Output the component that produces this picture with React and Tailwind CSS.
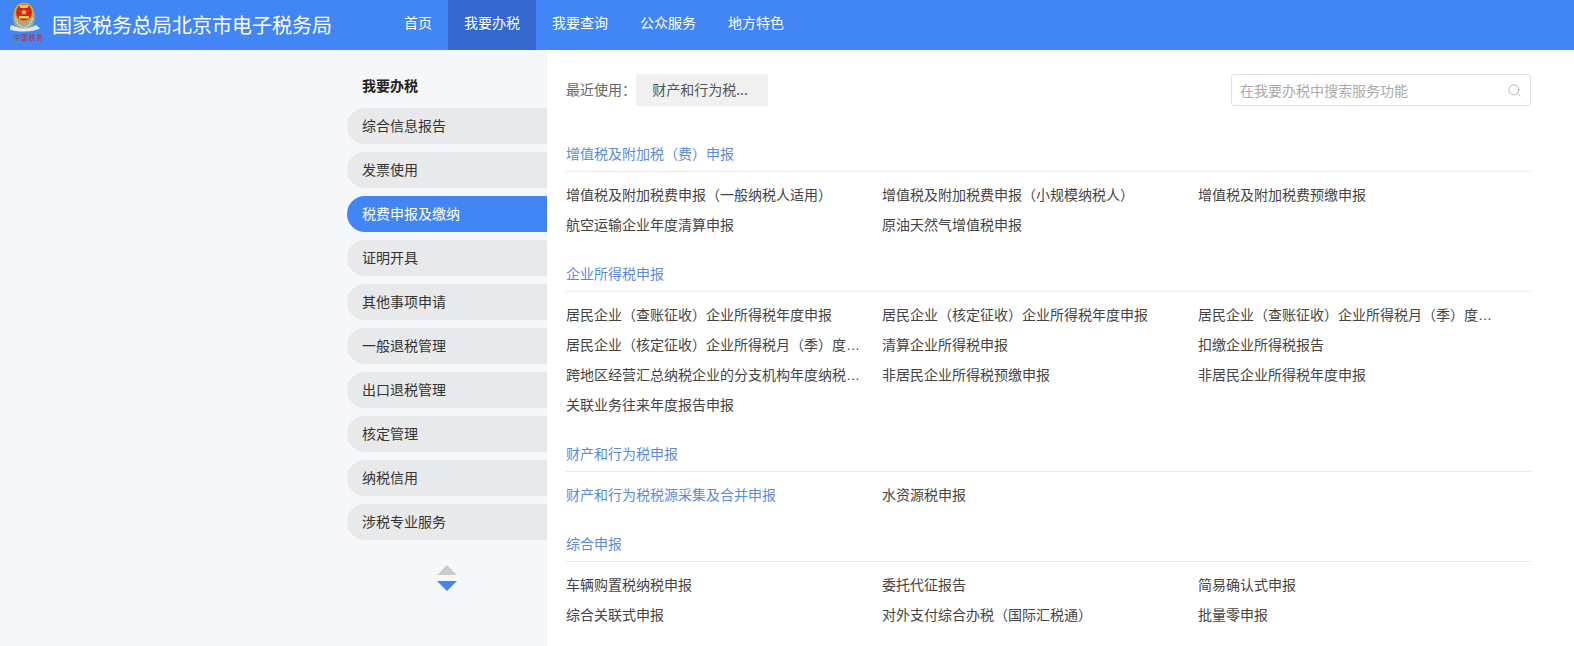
import { Search } from 'lucide-react';

const navItems = ['首页', '我要办税', '我要查询', '公众服务', '地方特色'];

const menuItems = [
  '综合信息报告',
  '发票使用',
  '税费申报及缴纳',
  '证明开具',
  '其他事项申请',
  '一般退税管理',
  '出口退税管理',
  '核定管理',
  '纳税信用',
  '涉税专业服务',
];

const sections = [
  {
    title: '增值税及附加税（费）申报',
    links: [
      '增值税及附加税费申报（一般纳税人适用）',
      '增值税及附加税费申报（小规模纳税人）',
      '增值税及附加税费预缴申报',
      '航空运输企业年度清算申报',
      '原油天然气增值税申报',
    ],
  },
  {
    title: '企业所得税申报',
    links: [
      '居民企业（查账征收）企业所得税年度申报',
      '居民企业（核定征收）企业所得税年度申报',
      '居民企业（查账征收）企业所得税月（季）度申报',
      '居民企业（核定征收）企业所得税月（季）度申报',
      '清算企业所得税申报',
      '扣缴企业所得税报告',
      '跨地区经营汇总纳税企业的分支机构年度纳税申报',
      '非居民企业所得税预缴申报',
      '非居民企业所得税年度申报',
      '关联业务往来年度报告申报',
    ],
  },
  {
    title: '财产和行为税申报',
    links: ['财产和行为税税源采集及合并申报', '水资源税申报'],
    active: 0,
  },
  {
    title: '综合申报',
    links: [
      '车辆购置税纳税申报',
      '委托代征报告',
      '简易确认式申报',
      '综合关联式申报',
      '对外支付综合办税（国际汇税通）',
      '批量零申报',
    ],
  },
];

const Logo = () => (
  <svg width="36" height="44" viewBox="10 3 36 44" className="shrink-0">
    {/* wreath and ribbon */}
    <path d="M14 13c-2 7 0 14 6 17h8c6-3 8-10 6-17l-3 1H17z" fill="#a3a898" />
    <path d="M15.5 16c0 6 3 10 8.500 11.500 5.500-1.500 8.500-5.500 8.500-11.500" fill="none" stroke="#d2d7cf" strokeWidth="1.6" strokeDasharray="2 1" />
    <path d="M12 25c4 2 7 3.500 12 3.500s8-1.500 12-3.500l4 3.500c-4 2-9 3-16 3s-12-1-16-3z" fill="#e4e8ec" />
    {/* emblem */}
    <circle cx="24" cy="12.500" r="10" fill="#d9a62a" />
    <circle cx="24" cy="12.500" r="8" fill="#d3241c" />
    <rect x="20" y="5" width="8" height="3" fill="#eec64e" />
    <path d="M19 16h10v2.500H19z" fill="#f2d568" />
    <path d="M24 9l.9 2.100 2.200.1-1.700 1.400.6 2.100-2-1.200-2 1.200.6-2.100-1.700-1.400 2.200-.1z" fill="#f5d65a" />
    <text x="14" y="40" fontSize="6.500" fill="#c9231d" fontFamily="'Noto Sans CJK SC', sans-serif" textLength="29">
      中国税务
    </text>
  </svg>
);

const SectionBlock = ({ section }) => (
  <div className="mb-[17px]">
    <h3 className="h-[36px] border-b border-[#e8e9eb] text-[14px] leading-[22px] pt-[6px] text-[#5a8ae0] font-normal">
      {section.title}
    </h3>
    <div className="grid grid-cols-[316px_316px_315px] pt-[7px]">
      {section.links.map((link, index) => (
        <div
          key={link}
          className={`h-[30px] leading-[32px] text-[14px] truncate pr-[20px] font-['Liberation_Sans','Noto_Sans_CJK_SC',sans-serif] ${
            section.active === index ? 'text-[#5a8ae0]' : 'text-[#444444]'
          }`}
        >
          {link}
        </div>
      ))}
    </div>
  </div>
);

export default function App() {
  return (
    <div className="h-[646px] overflow-hidden bg-[#f6f7f9] font-['Noto_Sans_CJK_SC','Liberation_Sans',sans-serif]">
      {/* header */}
      <header className="h-[50px] bg-[#4285f4] flex text-white">
        <div className="w-[388px] flex items-center pl-[10px]">
          <Logo />
          <span className="ml-[6px] text-[20px]">国家税务总局北京市电子税务局</span>
        </div>
        <nav className="flex text-[14px]">
          {navItems.map((item) => (
            <div key={item} className={`px-[16px] leading-[44px] ${item === '我要办税' ? 'bg-[#3367cc]' : ''}`}>
              {item}
            </div>
          ))}
        </nav>
      </header>

      <div className="flex pl-[347px]">
        {/* left menu */}
        <aside className="w-[200px] shrink-0 pt-[25px]">
          <div className="pl-[15px] text-[14px] font-bold leading-[20px] text-[#222222] mb-[13px]">我要办税</div>
          <div className="flex flex-col gap-[8px]">
            {menuItems.map((item) => (
              <div
                key={item}
                className={`h-[36px] leading-[35px] pl-[15px] rounded-l-[18px] text-[14px] ${
                  item === '税费申报及缴纳' ? 'bg-[#4285f4] text-white' : 'bg-[#e8e9eb] text-[#333333]'
                }`}
              >
                {item}
              </div>
            ))}
          </div>
          <div className="flex flex-col items-center gap-[6px] mt-[25px]">
            <div className="w-0 h-0 border-x-[10px] border-x-transparent border-b-[10px] border-b-[#c9cbd0]" />
            <div className="w-0 h-0 border-x-[10px] border-x-transparent border-t-[10px] border-t-[#4285f4]" />
          </div>
        </aside>

        {/* right content */}
        <main className="w-[1027px] h-[596px] bg-white pl-[19px] pr-[43px] pt-[24px] shadow-[0_0_2px_rgba(0,0,0,0.06)]">
          <div className="flex items-center justify-between h-[32px] mb-[30px]">
            <div className="flex items-center">
              <span className="w-[70px] text-[14px] text-[#666666] -mt-[2px]">最近使用：</span>
              <span className="w-[132px] h-[32px] leading-[31px] pr-[4px] text-center text-[14px] bg-[#f0f0f1] text-[#555555]">
                财产和行为税...
              </span>
            </div>
            <div className="w-[300px] h-[32px] flex items-center justify-between pl-[8px] pr-[8px] border border-[#dcdfe6] rounded-[3px] bg-white">
              <span className="text-[14px] text-[#aaaaaa]">在我要办税中搜索服务功能</span>
              <Search size={15} strokeWidth={1.2} className="text-[#a0a0a0]" />
            </div>
          </div>
          {sections.map((section) => (
            <SectionBlock key={section.title} section={section} />
          ))}
        </main>
      </div>
    </div>
  );
}
